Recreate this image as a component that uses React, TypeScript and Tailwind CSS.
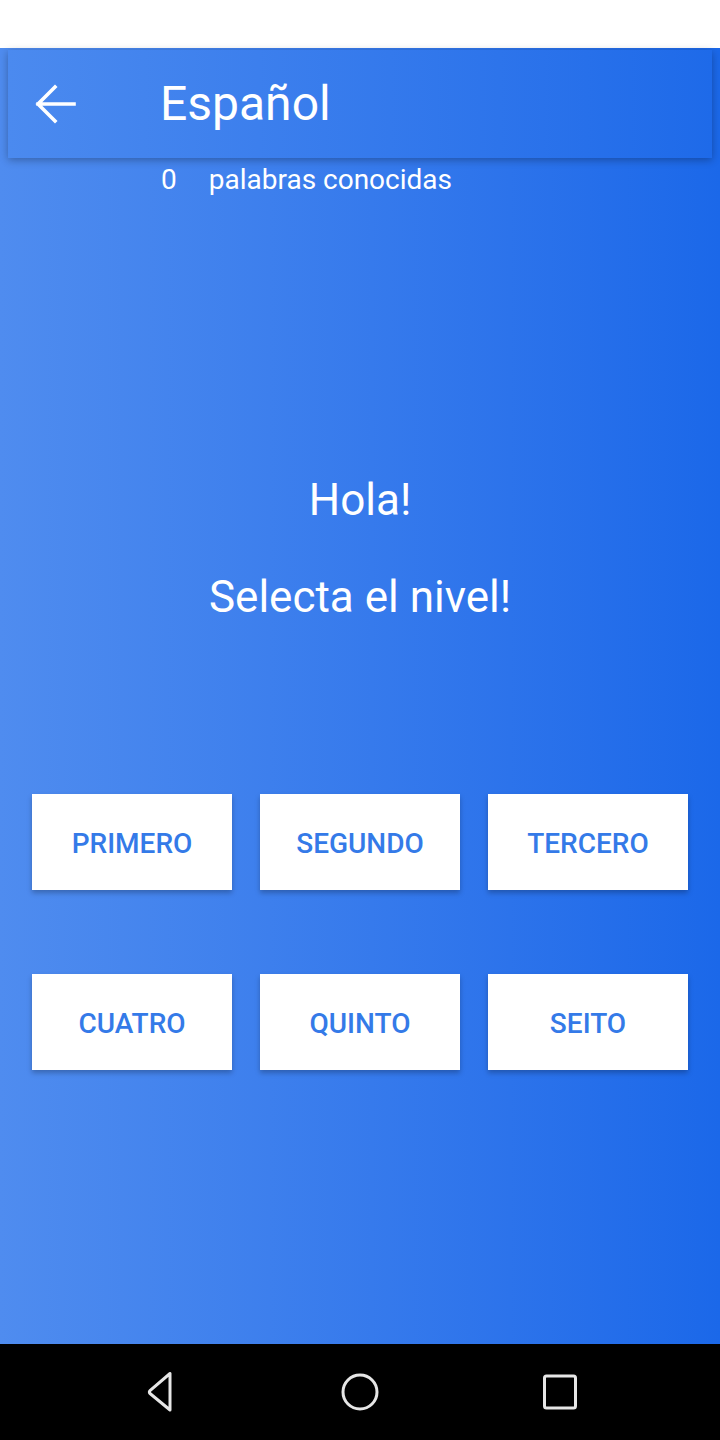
const levels = ["PRIMERO", "SEGUNDO", "TERCERO", "CUATRO", "QUINTO", "SEITO"];

function BackArrow() {
  return (
    <svg width="44" height="44" viewBox="0 0 44 44" fill="none">
      <path
        d="M40 22H4M21 5 4 22l17 17"
        stroke="white"
        strokeWidth="3.6"
        strokeLinecap="square"
      />
    </svg>
  );
}

function NavBar() {
  return (
    <div className="h-[96px] bg-black flex items-center justify-center gap-[160px]">
      <svg width="40" height="40" viewBox="0 0 40 40" fill="none">
        <path
          d="M30 1.5v36.5L10 21.5a2 2 0 0 1 0-3z"
          stroke="#e6e6e6"
          strokeWidth="3"
          strokeLinejoin="round"
        />
      </svg>
      <svg width="40" height="40" viewBox="0 0 40 40" fill="none">
        <circle cx="20" cy="20" r="17" stroke="#e6e6e6" strokeWidth="3" />
      </svg>
      <svg width="40" height="40" viewBox="0 0 40 40" fill="none">
        <rect x="4.5" y="4" width="31" height="32" rx="2" stroke="#e6e6e6" strokeWidth="3" />
      </svg>
    </div>
  );
}

export default function App() {
  return (
    <div className="w-[720px] h-[1440px] flex flex-col bg-white font-['Roboto',sans-serif] overflow-hidden">
      <div className="h-[48px] bg-white" />
      <main className="flex-1 flex flex-col bg-gradient-to-r from-[#4f8cef] to-[#1b68e9]">
        <header className="mx-2 mt-[2px] h-[108px] flex items-center bg-gradient-to-r from-[#4b8aef] to-[#1e6ae9] shadow-[0_2px_8px_rgba(0,0,0,0.3)]">
          <div className="w-[152px] pl-[26px] flex items-center">
            <BackArrow />
          </div>
          <h1 className="text-[48px] leading-none text-white">Español</h1>
        </header>
        <div className="mt-[6px] pl-[161px] flex items-center gap-[32px] text-[28px] leading-[32px] text-white">
          <span>0</span>
          <span>palabras conocidas</span>
        </div>
        <div className="mt-[278px] text-center text-[44px] leading-[52px] text-white">Hola!</div>
        <div className="mt-[45px] text-center text-[44px] leading-[52px] text-white">
          Selecta el nivel!
        </div>
        <div className="mt-[171px] px-8 grid grid-cols-3 gap-x-[28px] gap-y-[84px]">
          {levels.map((level) => (
            <button
              key={level}
              className="h-[96px] pt-[3px] bg-white flex items-center justify-center text-[28px] font-medium text-[#347ae8] shadow-[0_3px_5px_rgba(0,0,0,0.25)]"
            >
              {level}
            </button>
          ))}
        </div>
      </main>
      <NavBar />
    </div>
  );
}
